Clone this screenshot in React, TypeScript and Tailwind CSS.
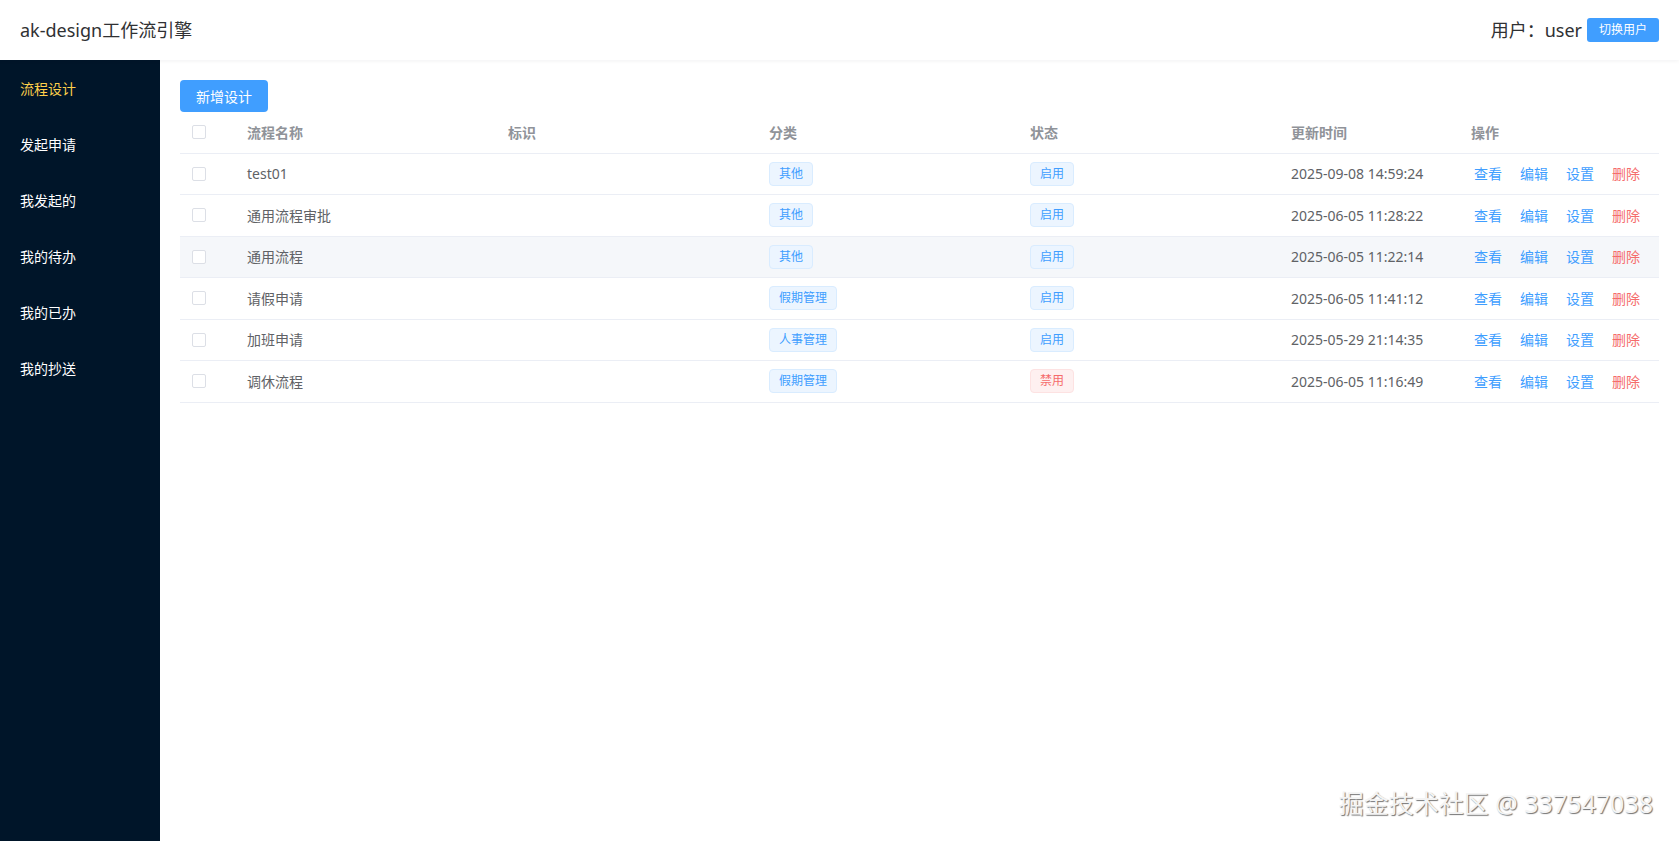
import React from "react";

type Row = {
  name: string;
  category: string;
  enabled: boolean;
  time: string;
  hover?: boolean;
};

const rows: Row[] = [
  { name: "test01", category: "其他", enabled: true, time: "2025-09-08 14:59:24" },
  { name: "通用流程审批", category: "其他", enabled: true, time: "2025-06-05 11:28:22" },
  { name: "通用流程", category: "其他", enabled: true, time: "2025-06-05 11:22:14", hover: true },
  { name: "请假申请", category: "假期管理", enabled: true, time: "2025-06-05 11:41:12" },
  { name: "加班申请", category: "人事管理", enabled: true, time: "2025-05-29 21:14:35" },
  { name: "调休流程", category: "假期管理", enabled: false, time: "2025-06-05 11:16:49" },
];

const menu = ["流程设计", "发起申请", "我发起的", "我的待办", "我的已办", "我的抄送"];

function Checkbox() {
  return <span className="block w-[14px] h-[14px] border border-[#dcdfe6] rounded-[2px] bg-white" />;
}

function Tag({ text, danger }: { text: string; danger?: boolean }) {
  return (
    <span
      className={
        danger
          ? "inline-flex items-center h-[24px] px-[9px] border border-[#fde2e2] bg-[#fef0f0] text-[#f56c6c] rounded-[4px] text-[12px] leading-[22px]"
          : "inline-flex items-center h-[24px] px-[9px] border border-[#d9ecff] bg-[#ecf5ff] text-[#409eff] rounded-[4px] text-[12px] leading-[22px]"
      }
    >
      {text}
    </span>
  );
}

function TableRow({ row }: { row: Row }) {
  return (
    <div
      className={
        "grid grid-cols-[55px_261px_261px_261px_261px_180px_1fr] h-[41.5px] items-center border-b border-[#ebeef5] text-[14px] text-[#606266] " +
        (row.hover ? "bg-[#f5f7fa]" : "bg-white")
      }
    >
      <div className="pl-[12px]">
        <Checkbox />
      </div>
      <div className="px-[12px] truncate">{row.name}</div>
      <div className="px-[12px]"></div>
      <div className="px-[12px]">
        <Tag text={row.category} />
      </div>
      <div className="px-[12px]">
        <Tag text={row.enabled ? "启用" : "禁用"} danger={!row.enabled} />
      </div>
      <div className="px-[12px] whitespace-nowrap">{row.time}</div>
      <div className="px-[12px] flex gap-[18px] whitespace-nowrap">
        <span className="ml-[3px] text-[#409eff]">查看</span>
        <span className="text-[#409eff]">编辑</span>
        <span className="text-[#409eff]">设置</span>
        <span className="text-[#f56c6c]">删除</span>
      </div>
    </div>
  );
}

export default function App() {
  return (
    <div className="relative h-screen w-full flex flex-col bg-white font-['Noto_Sans','Noto_Sans_CJK_SC',sans-serif] overflow-hidden">
      <header className="h-[60px] shrink-0 flex items-center justify-between pl-[20px] pr-[20px] bg-white shadow-[0_1px_4px_rgba(0,21,41,0.06)] relative z-10">
        <div className="text-[18px] text-[#303133] leading-[24px]">ak-design工作流引擎</div>
        <div className="flex items-center gap-[5px]">
          <span className="text-[18px] text-[#303133] leading-[24px]">用户：user</span>
          <button className="w-[72px] h-[24px] rounded-[3px] bg-[#409eff] text-white text-[12px] leading-[24px]">
            切换用户
          </button>
        </div>
      </header>
      <div className="flex flex-1 min-h-0">
        <aside className="w-[160px] shrink-0 bg-[#001529]">
          {menu.map((m, i) => (
            <div
              key={m}
              className={
                "h-[56px] flex items-center pl-[20px] text-[14px] " +
                (i === 0 ? "text-[#ffd04b]" : "text-white")
              }
            >
              {m}
            </div>
          ))}
        </aside>
        <main className="flex-1 pt-[20px] px-[20px]">
          <button className="w-[88px] h-[32px] rounded-[4px] bg-[#409eff] text-white text-[14px]">
            新增设计
          </button>
          <div className="w-full">
            <div className="grid grid-cols-[55px_261px_261px_261px_261px_180px_1fr] h-[41.5px] items-center border-b border-[#ebeef5] text-[14px] font-bold text-[#909399]">
              <div className="pl-[12px]">
                <Checkbox />
              </div>
              <div className="px-[12px]">流程名称</div>
              <div className="px-[12px]">标识</div>
              <div className="px-[12px]">分类</div>
              <div className="px-[12px]">状态</div>
              <div className="px-[12px]">更新时间</div>
              <div className="px-[12px]">操作</div>
            </div>
            {rows.map((r) => (
              <TableRow key={r.name} row={r} />
            ))}
          </div>
        </main>
      </div>
      <div className="absolute right-[26px] bottom-[22px] text-[25px] leading-[32px] text-[#f4f4f4] [text-shadow:1px_1px_1px_rgba(0,0,0,0.55)] pointer-events-none">
        掘金技术社区 @ 337547038
      </div>
    </div>
  );
}
